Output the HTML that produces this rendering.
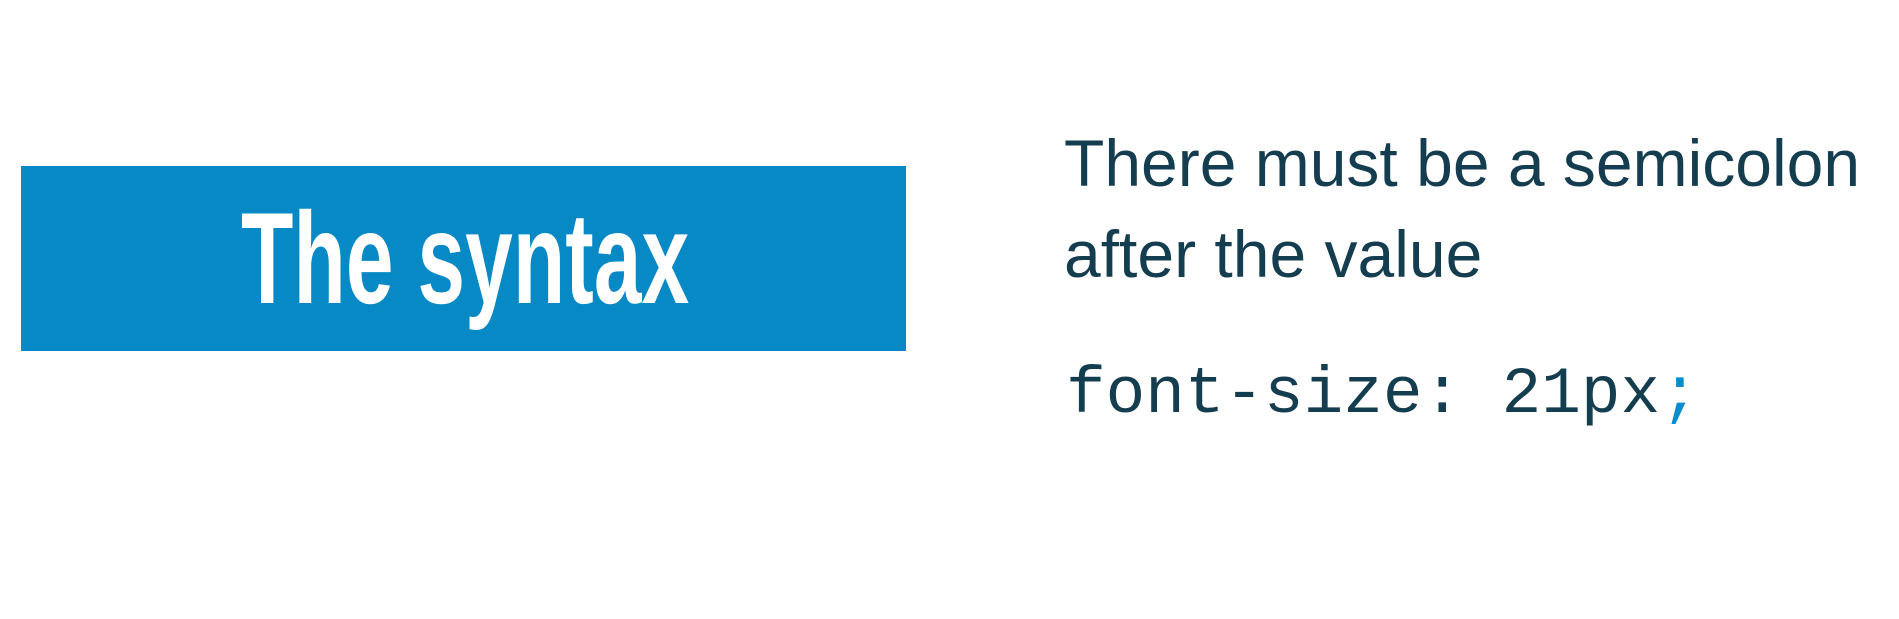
<!DOCTYPE html>
<html><head><meta charset="utf-8"><style>
body{margin:0;width:1899px;height:619px;background:#fff;position:relative;overflow:hidden;font-family:"Liberation Sans",sans-serif}
.box{position:absolute;left:21px;top:166px;width:885px;height:185px;background:#0689c4}
.t{position:absolute;left:241px;top:193px;font-size:130px;line-height:130px;font-weight:bold;color:#fff;transform:scaleX(0.66);transform-origin:0 0;white-space:nowrap}
.p{position:absolute;left:1064px;font-size:66px;line-height:66px;color:#153d50;white-space:nowrap}
.c{position:absolute;left:1066px;top:362px;font-family:"Liberation Mono",monospace;font-size:66px;line-height:66px;color:#153d50;white-space:pre}
</style></head><body>
<div class="box"></div>
<div class="t">The syntax</div>
<div class="p" style="top:130px">There must be a semicolon</div>
<div class="p" style="top:221px">after the value</div>
<div class="c">font-size: 21px<span style="color:#0a8ccc">;</span></div>
</body></html>
